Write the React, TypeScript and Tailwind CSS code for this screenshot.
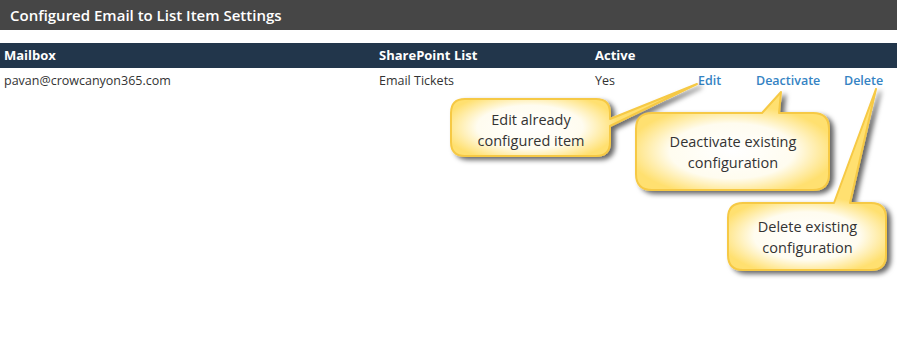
import React from 'react';

const callouts = [
  {
    id: 'c1',
    d: 'M465 99 H596 Q610 99 610 113 V119 L697 84 L610 126 V142 Q610 156 596 156 H465 Q451 156 451 142 V113 Q451 99 465 99 Z',
    cx: 530,
    cy: 127,
    rx: 88,
    ry: 36,
  },
  {
    id: 'c2',
    d: 'M652 113 H762 L781 92 L779 113 H813 Q829 113 829 129 V174 Q829 190 813 190 H652 Q636 190 636 174 V129 Q636 113 652 113 Z',
    cx: 732,
    cy: 151,
    rx: 104,
    ry: 46,
  },
  {
    id: 'c3',
    d: 'M743 203 H834 L876 89 L850 203 H871 Q886 203 886 218 V255 Q886 270 871 270 H743 Q728 270 728 255 V218 Q728 203 743 203 Z',
    cx: 807,
    cy: 236,
    rx: 88,
    ry: 40,
  },
];

function Callouts() {
  return (
    <svg className="absolute left-0 top-0 pointer-events-none" width={897} height={351}>
      <defs>
        <filter id="shadow" x="-20%" y="-20%" width="140%" height="150%">
          <feDropShadow dx="4" dy="3" stdDeviation="2.5" floodColor="#000" floodOpacity="0.6" />
        </filter>
        {callouts.map((c) => (
          <radialGradient
            key={c.id}
            id={`g-${c.id}`}
            gradientUnits="userSpaceOnUse"
            cx={c.cx}
            cy={c.cy}
            r={c.rx}
            gradientTransform={`translate(${c.cx} ${c.cy}) scale(1 ${c.ry / c.rx}) translate(${-c.cx} ${-c.cy})`}
          >
            <stop offset="0%" stopColor="#ffffff" />
            <stop offset="60%" stopColor="#fffcef" />
            <stop offset="100%" stopColor="#ffe070" />
          </radialGradient>
        ))}
      </defs>
      {callouts.map((c) => (
        <path
          key={c.id}
          d={c.d}
          fill={`url(#g-${c.id})`}
          stroke="#f6c944"
          strokeWidth={2}
          strokeLinejoin="round"
          filter="url(#shadow)"
        />
      ))}
    </svg>
  );
}

export default function App() {
  return (
    <div
      className="relative w-[897px] h-[351px] bg-white overflow-hidden"
      style={{ fontFamily: '"Open Sans", "Noto Sans", sans-serif' }}
    >
      <div className="h-[30px] bg-[#464646] px-[10px] flex items-center text-white text-[15px] font-semibold">
        Configured Email to List Item Settings
      </div>

      <div className="mt-[13px] h-[25px] bg-[#22364b] grid grid-cols-[375px_216px_1fr] items-center pl-[4px] text-white text-[13px] font-bold">
        <span>Mailbox</span>
        <span>SharePoint List</span>
        <span>Active</span>
      </div>

      <div className="h-[26px] grid grid-cols-[375px_216px_103px_58px_88px_1fr] items-center pl-[4px] text-[12.5px] text-[#333333]">
        <span>pavan@crowcanyon365.com</span>
        <span>Email Tickets</span>
        <span>Yes</span>
        <a className="text-[#3583c3] font-semibold">Edit</a>
        <a className="text-[#3583c3] font-semibold">Deactivate</a>
        <a className="text-[#3583c3] font-semibold">Delete</a>
      </div>

      <Callouts />

      <div className="absolute left-[451px] top-[109px] w-[160px] text-center text-[14.5px] leading-[21px] text-[#333333]">
        Edit already
        <br />
        configured item
      </div>
      <div className="absolute left-[636px] top-[131px] w-[194px] text-center text-[14.5px] leading-[21px] text-[#333333]">
        Deactivate existing
        <br />
        configuration
      </div>
      <div className="absolute left-[728px] top-[216px] w-[159px] text-center text-[14.5px] leading-[21px] text-[#333333]">
        Delete existing
        <br />
        configuration
      </div>
    </div>
  );
}
